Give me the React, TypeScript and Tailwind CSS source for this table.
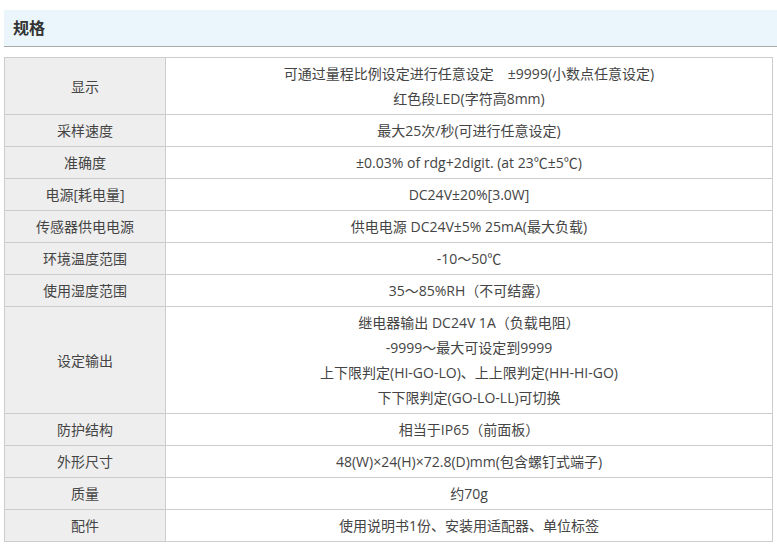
const rows: { label: string; lines: string[] }[] = [
  {
    label: "显示",
    lines: ["可通过量程比例设定进行任意设定\u3000±9999(小数点任意设定)", "红色段LED(字符高8mm)"],
  },
  { label: "采样速度", lines: ["最大25次/秒(可进行任意设定)"] },
  { label: "准确度", lines: ["±0.03% of rdg+2digit. (at 23℃±5℃)"] },
  { label: "电源[耗电量]", lines: ["DC24V±20%[3.0W]"] },
  { label: "传感器供电电源", lines: ["供电电源 DC24V±5% 25mA(最大负载)"] },
  { label: "环境温度范围", lines: ["-10～50℃"] },
  { label: "使用湿度范围", lines: ["35～85%RH（不可结露）"] },
  {
    label: "设定输出",
    lines: [
      "继电器输出 DC24V 1A（负载电阻）",
      "-9999～最大可设定到9999",
      "上下限判定(HI-GO-LO)、上上限判定(HH-HI-GO)",
      "下下限判定(GO-LO-LL)可切换",
    ],
  },
  { label: "防护结构", lines: ["相当于IP65（前面板）"] },
  { label: "外形尺寸", lines: ["48(W)×24(H)×72.8(D)mm(包含螺钉式端子)"] },
  { label: "质量", lines: ["约70g"] },
  { label: "配件", lines: ["使用说明书1份、安装用适配器、单位标签"] },
];

export default function App() {
  return (
    <div
      className="w-[777px] h-[548px] bg-white pt-[10px] pl-[4px] text-[#333]"
      style={{ fontFamily: '"Open Sans", "Noto Sans CJK SC", sans-serif' }}
    >
      {/* Section header */}
      <div className="h-[37px] bg-[#eaf6fb] border-b border-[#a9a9a9] flex items-center pl-[9px]">
        <h2 className="text-[16px] font-bold text-[#333]">规格</h2>
      </div>

      {/* Spec table */}
      <table className="mt-[10px] w-[769px] border-collapse text-[14px] leading-[25px] text-[#444]">
        <tbody>
          {rows.map((row) => (
            <tr key={row.label}>
              <th className="w-[161px] bg-[#eeeeee] border border-[#cccccc] font-normal text-center py-[3px]">
                <div className="h-[25px] overflow-hidden">{row.label}</div>
              </th>
              <td className="border border-[#cccccc] text-center py-[3px] whitespace-pre">
                {row.lines.map((line, i) => (
                  <div key={i} className="h-[25px] overflow-hidden">
                    {line}
                  </div>
                ))}
              </td>
            </tr>
          ))}
        </tbody>
      </table>
    </div>
  );
}
